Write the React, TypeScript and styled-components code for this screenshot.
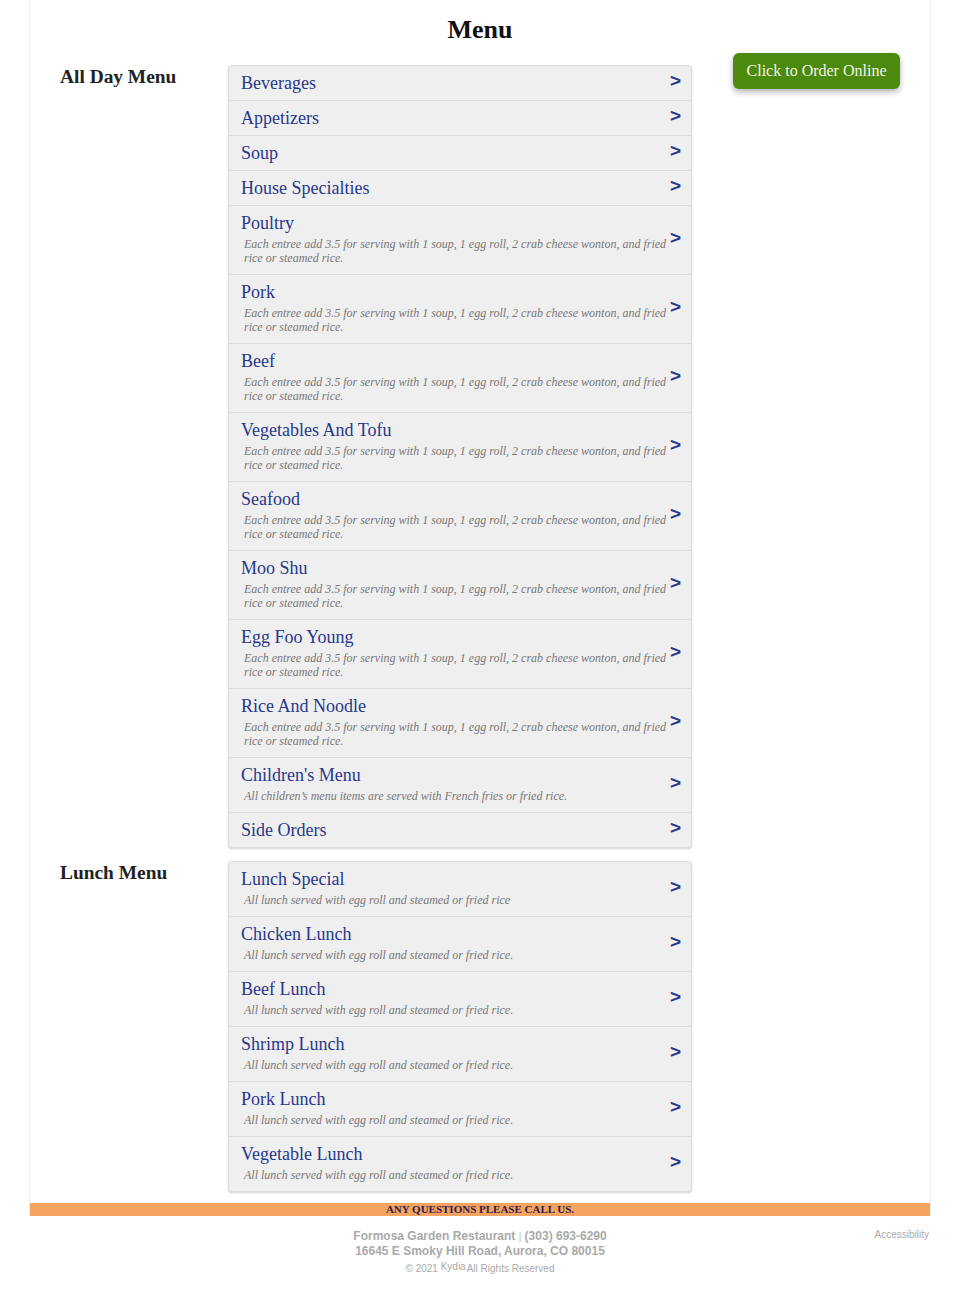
import styled, { createGlobalStyle } from "styled-components"

const GlobalStyle = createGlobalStyle`
    html, body {
        margin: 0;
        padding: 0;
        background: #fff;
    }
    body {
        font-family: "Liberation Serif", "Times New Roman", serif;
        color: #222;
    }
`

type Item = { name: string; note?: string }

const ENTREE = "Each entree add 3.5 for serving with 1 soup, 1 egg roll, 2 crab cheese wonton, and fried rice or steamed rice."
const LUNCH = "All lunch served with egg roll and steamed or fried rice."

const allDay: Item[] = [
    { name: "Beverages" },
    { name: "Appetizers" },
    { name: "Soup" },
    { name: "House Specialties" },
    { name: "Poultry", note: ENTREE },
    { name: "Pork", note: ENTREE },
    { name: "Beef", note: ENTREE },
    { name: "Vegetables And Tofu", note: ENTREE },
    { name: "Seafood", note: ENTREE },
    { name: "Moo Shu", note: ENTREE },
    { name: "Egg Foo Young", note: ENTREE },
    { name: "Rice And Noodle", note: ENTREE },
    { name: "Children's Menu", note: "All children’s menu items are served with French fries or fried rice." },
    { name: "Side Orders" },
]

const lunch: Item[] = [
    { name: "Lunch Special", note: "All lunch served with egg roll and steamed or fried rice" },
    { name: "Chicken Lunch", note: LUNCH },
    { name: "Beef Lunch", note: LUNCH },
    { name: "Shrimp Lunch", note: LUNCH },
    { name: "Pork Lunch", note: LUNCH },
    { name: "Vegetable Lunch", note: LUNCH },
]

function MenuList({ items }: { items: Item[] }) {
    return (
        <ListBox>
            {items.map((it) => (
                <Row key={it.name}>
                    <RowText>
                        <RowTitle>{it.name}</RowTitle>
                        {it.note && <RowNote>{it.note}</RowNote>}
                    </RowText>
                    <Arrow>&gt;</Arrow>
                </Row>
            ))}
        </ListBox>
    )
}

export default function App() {
    return (
        <>
            <GlobalStyle />
            <Page>
                <Title>Menu</Title>
                <Body>
                    <Sections>
                        <Section>
                            <SectionHeading>All Day Menu</SectionHeading>
                            <MenuList items={allDay} />
                        </Section>
                        <Section>
                            <SectionHeading>Lunch Menu</SectionHeading>
                            <MenuList items={lunch} />
                        </Section>
                    </Sections>
                    <Aside>
                        <OrderButton>Click to Order Online</OrderButton>
                    </Aside>
                </Body>
                <CallBar>ANY QUESTIONS PLEASE CALL US.</CallBar>
            </Page>
            <Footer>
                <span />
                <FooterInfo>
                    <FooterLine>
                        Formosa Garden Restaurant <Pipe>|</Pipe> (303) 693-6290
                    </FooterLine>
                    <FooterLine>16645 E Smoky Hill Road, Aurora, CO 80015</FooterLine>
                    <Copyright>
                        © 2021 <Kydia>Kydia</Kydia>All Rights Reserved
                    </Copyright>
                </FooterInfo>
                <Accessibility>Accessibility</Accessibility>
            </Footer>
        </>
    )
}

const Page = styled.div`
    width: 900px;
    margin: 0 auto;
    border-left: 1px solid #f1f1f1;
    border-right: 1px solid #f1f1f1;
`

const Title = styled.h1`
    margin: 0 0 8px;
    padding-top: 15px;
    font-size: 26px;
    line-height: 30px;
    font-weight: bold;
    text-align: center;
    color: #111;
`

const Body = styled.div`
    display: flex;
    align-items: flex-start;
    padding: 0 30px 0 30px;
`

const Sections = styled.div`
    display: flex;
    flex-direction: column;
    gap: 13px;
    padding-top: 12px;
    padding-bottom: 11px;
`

const Section = styled.section`
    display: grid;
    grid-template-columns: 168px 464px;
    align-items: start;
`

const SectionHeading = styled.h2`
    margin: 1px 0 0;
    font-size: 19.4px;
    line-height: 22px;
    font-weight: bold;
    color: #222;
`

const ListBox = styled.div`
    background: #efefef;
    border: 1px solid #dedede;
    border-radius: 4px;
    box-shadow: 0 1px 2px rgba(0, 0, 0, 0.18);
    overflow: hidden;
`

const Row = styled.div`
    display: flex;
    align-items: center;
    padding: 6px 9px 6px 12px;
    & + & {
        border-top: 1px solid #dcdcdc;
    }
`

const RowText = styled.div`
    flex: 1;
    min-width: 0;
`

const RowTitle = styled.div`
    font-size: 18px;
    line-height: 22px;
    color: #28388c;
`

const RowNote = styled.div`
    margin: 3px 0;
    padding-left: 3px;
    font-size: 12px;
    line-height: 14px;
    font-style: italic;
    color: #777;
`

const Arrow = styled.span`
    flex: none;
    width: 12px;
    margin-top: -5px;
    margin-left: 2px;
    font-family: "Liberation Sans", Arial, sans-serif;
    font-weight: bold;
    font-size: 19px;
    line-height: 22px;
    color: #28388c;
`

const Aside = styled.div`
    flex: 1;
    display: flex;
    justify-content: flex-end;
`

const OrderButton = styled.button`
    width: 167px;
    height: 36px;
    padding: 0;
    border: none;
    border-radius: 6px;
    background: #4b8a0c;
    color: #f4f4ea;
    font-family: "Liberation Serif", "Times New Roman", serif;
    font-size: 16px;
    box-shadow: 0 3px 6px rgba(0, 0, 0, 0.3);
    cursor: pointer;
`

const CallBar = styled.div`
    background: #f4a460;
    text-align: center;
    font-size: 11px;
    line-height: 13px;
    font-weight: bold;
    color: #2e1d4d;
`

const Footer = styled.footer`
    width: 902px;
    margin: 0 auto;
    display: grid;
    grid-template-columns: 1fr auto 1fr;
    padding-top: 13px;
    font-family: "Liberation Sans", Arial, sans-serif;
    color: #aaa;
`

const FooterInfo = styled.div`
    text-align: center;
`

const FooterLine = styled.div`
    font-size: 12px;
    line-height: 14px;
    font-weight: bold;
`

const Pipe = styled.span`
    font-size: 10px;
    font-weight: normal;
    color: #bbb;
`

const Copyright = styled.div`
    margin-top: 2px;
    font-size: 10px;
    line-height: 14px;
    color: #aaa;
`

const Kydia = styled.span`
    font-size: 10px;
    vertical-align: 2px;
    margin-right: 1px;
`

const Accessibility = styled.div`
    justify-self: end;
    margin-right: 2px;
    font-size: 10px;
    line-height: 12px;
    color: #aaa;
`
